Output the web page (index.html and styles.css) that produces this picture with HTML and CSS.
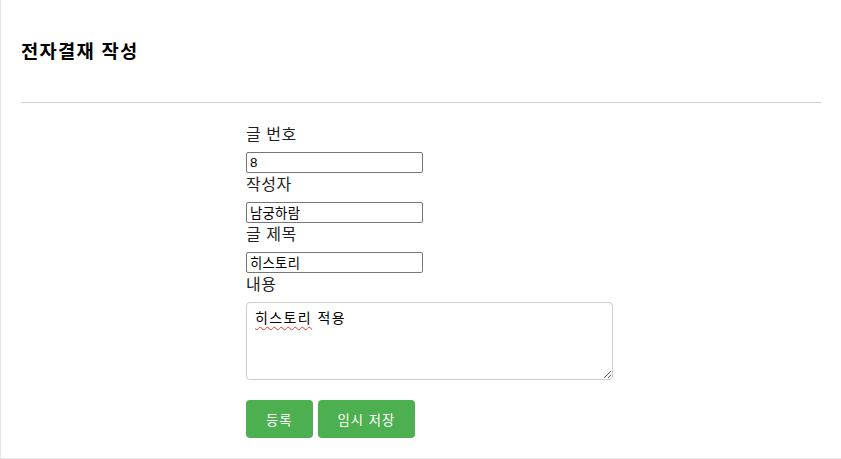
FILE: index.html
```html
<!DOCTYPE html>
<html lang="ko">
<head>
<meta charset="utf-8">
<title>전자결재 작성</title>
<link rel="stylesheet" href="styles.css">
</head>
<body>
<div class="panel">
  <h3 class="title">전자결재 작성</h3>
  <hr class="divider">
  <form class="form">
    <label class="label" for="no">글 번호</label>
    <input class="field" id="no" type="text" value="8">
    <label class="label" for="writer">작성자</label>
    <input class="field" id="writer" type="text" value="남궁하람">
    <label class="label" for="subject">글 제목</label>
    <input class="field" id="subject" type="text" value="히스토리">
    <label class="label">내용</label>
    <div class="content" role="textbox" aria-multiline="true"><span class="misspell">히스토리</span> 적용</div>
    <div class="actions">
      <button type="button" class="btn">등록</button>
      <button type="button" class="btn">임시 저장</button>
    </div>
  </form>
</div>
</body>
</html>
```

FILE: styles.css
```css
html, body {
  margin: 0;
  padding: 0;
  background: #fff;
  overflow: hidden;
}

body {
  font-family: "Liberation Sans", "Noto Sans CJK KR", sans-serif;
  color: #222;
}

.panel {
  box-sizing: border-box;
  width: 842px;
  padding: 20px 20px 20px 20px;
  border-left: 1px solid #e6e6e6;
  border-bottom: 1px solid #e6e6e6;
  border-right: 1px solid #e6e6e6;
}

.title {
  margin: 18px 0 37px;
  font-size: 18.72px;
  font-weight: bold;
  color: #000;
  line-height: 27px;
  letter-spacing: 1.3px;
}

.divider {
  margin: 0 0 20px;
  border: 0;
  border-top: 1px solid #cccccc;
  height: 0;
}

.form {
  width: 350px;
  margin: 0 auto;
}

.label {
  display: block;
  font-size: 16px;
  line-height: 23px;
  margin-bottom: 6px;
  color: #222;
  letter-spacing: 0.5px;
}

.field {
  display: block;
  box-sizing: border-box;
  width: 177px;
  height: 21px;
  margin: 0;
  padding: 1px 3px;
  border: 1px solid #767676;
  border-radius: 2px;
  font-family: "Liberation Sans", "Noto Sans CJK KR", sans-serif;
  font-size: 13.33px;
  color: #000;
  background: #fff;
  letter-spacing: 0.3px;
}

.content {
  box-sizing: border-box;
  width: 367px;
  height: 78px;
  padding: 5px 8px;
  border: 1px solid #cccccc;
  border-radius: 4px;
  font-size: 14px;
  line-height: 20px;
  color: #000;
  letter-spacing: 1.4px;
  resize: vertical;
  overflow: auto;
}

.misspell {
  text-decoration: underline wavy #e53935;
  text-decoration-thickness: 1px;
  text-underline-offset: 3px;
}

.actions {
  display: flex;
  gap: 5px;
  margin-top: 20px;
}

.btn {
  height: 38px;
  padding: 0 20px;
  border: 0;
  border-radius: 4px;
  background: #4caf50;
  color: #fff;
  font-family: "Liberation Sans", "Noto Sans CJK KR", sans-serif;
  font-size: 13.33px;
  letter-spacing: 1px;
  cursor: pointer;
}
```
